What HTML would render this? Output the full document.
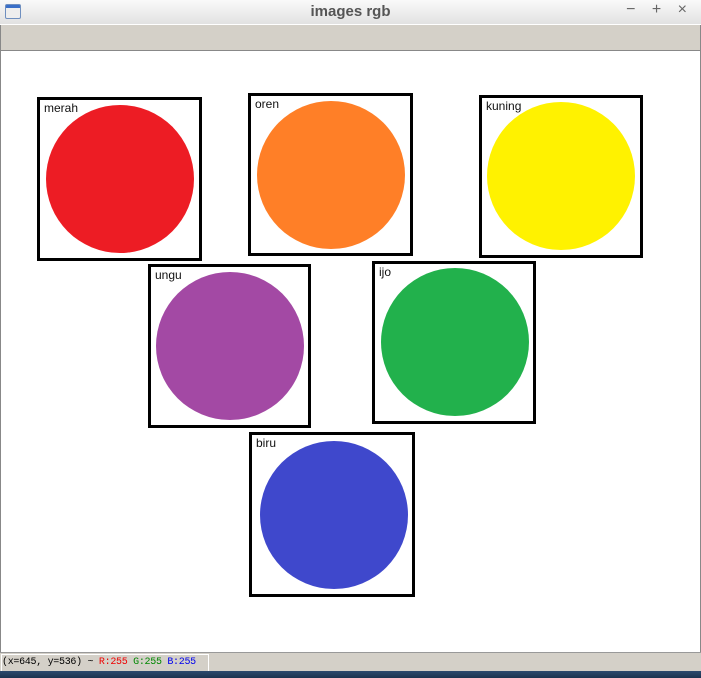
<!DOCTYPE html>
<html><head><style>
body{margin:0;width:701px;height:678px;overflow:hidden;background:#fff;position:relative;font-family:"Liberation Sans",sans-serif}
.t{position:absolute;left:0;top:0;width:701px;height:24px;background:linear-gradient(#fafafa,#e2e2e2);border-bottom:1px solid #fff}
.t .n{position:absolute;left:0;width:701px;text-align:center;top:3px;font-weight:bold;font-size:15px;color:#555}
.t .c{position:absolute;right:8px;top:1px;font-size:16px;color:#666;letter-spacing:6px}
.ic{position:absolute;left:5px;top:4px;width:14px;height:13px;border:1px solid #6f8fbf;background:linear-gradient(#3a6fc8 0 3px,#eee 3px);border-radius:2px}
.tb{position:absolute;left:0;top:25px;width:699px;height:25px;background:#d4d0c8;border:1px solid #888;border-top:none}
.side{position:absolute;top:51px;width:1px;height:601px;background:#888}
.b{position:absolute;border:3px solid #000;box-sizing:border-box}
.b span{position:absolute;left:4px;top:1px;font-size:12px;color:#111;z-index:2}
.ci{position:absolute;border-radius:50%;width:148px;height:148px}
.st{position:absolute;left:0;top:652px;width:701px;height:19px;background:#d4d0c8;border-top:1px solid #999}
.st div{position:absolute;left:1px;top:1px;width:206px;height:16px;border:1px solid #fff;font-family:"Liberation Mono",monospace;font-size:10px;letter-spacing:-0.3px;line-height:16px;color:#000;white-space:nowrap;overflow:hidden}
.tk{position:absolute;left:0;top:671px;width:701px;height:7px;background:linear-gradient(#2c4a6e,#1b3350)}
</style></head><body>
<div class="t"><div class="ic"></div><div class="n">images rgb</div><div class="c">− + ×</div></div>
<div class="tb"></div>
<div class="side" style="left:0"></div><div class="side" style="left:700px"></div>

<div class="b" style="left:37px;top:97px;width:165px;height:164px"><span>merah</span></div>
<div class="ci" style="left:46px;top:105px;background:#ed1c24"></div>
<div class="b" style="left:248px;top:93px;width:165px;height:163px"><span>oren</span></div>
<div class="ci" style="left:257px;top:101px;background:#ff7f27"></div>
<div class="b" style="left:479px;top:95px;width:164px;height:163px"><span>kuning</span></div>
<div class="ci" style="left:487px;top:102px;background:#fff200"></div>
<div class="b" style="left:148px;top:264px;width:163px;height:164px"><span>ungu</span></div>
<div class="ci" style="left:156px;top:272px;background:#a349a4"></div>
<div class="b" style="left:372px;top:261px;width:164px;height:163px"><span>ijo</span></div>
<div class="ci" style="left:381px;top:268px;background:#22b14c"></div>
<div class="b" style="left:249px;top:432px;width:166px;height:165px"><span>biru</span></div>
<div class="ci" style="left:260px;top:441px;background:#3f48cc"></div>

<div class="st"><div>(x=645, y=536) ~ <span style="color:#e00">R:255</span> <span style="color:#080">G:255</span> <span style="color:#00e">B:255</span></div></div>
<div class="tk"></div>
</body></html>
